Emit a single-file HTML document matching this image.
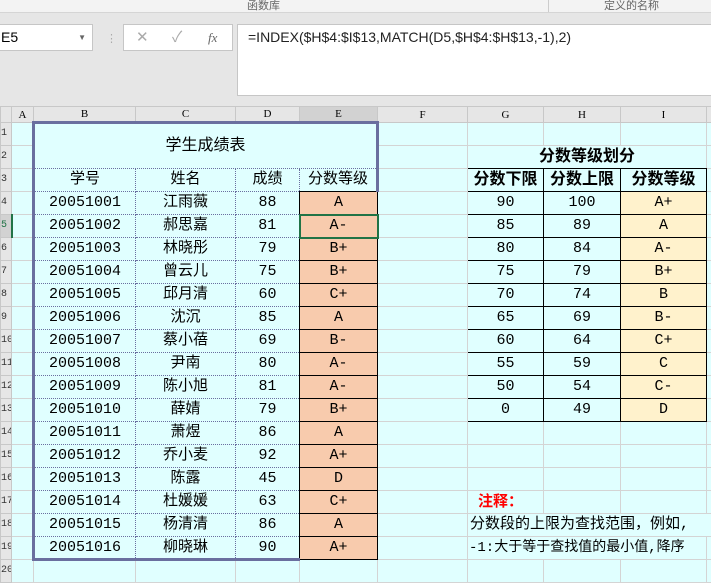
<!DOCTYPE html>
<html><head><meta charset="utf-8"><style>
*{margin:0;padding:0;box-sizing:border-box}
body{width:711px;height:565px;overflow:hidden;background:#e6e6e6;position:relative;font-family:"Liberation Sans","Noto Sans CJK SC",sans-serif}
.rib{position:absolute;left:0;top:0;width:711px;height:13px;background:#f3f3f3;border-bottom:1px solid #d5d5d5;font-size:11px;color:#666;overflow:hidden}
.rib span{position:absolute;top:-3px}
.box{position:absolute;background:#fff;border:1px solid #c6c6c6}
table{position:absolute;left:0;top:106px;width:720px;border-collapse:collapse;table-layout:fixed;font-family:"Liberation Mono","Noto Sans CJK SC",monospace}
td{height:23px;border:1px solid #d4d4d4;background:#e0ffff;text-align:center;font-size:15px;color:#000;white-space:nowrap;overflow:visible;padding:0;line-height:20px}
tr.h td{height:16px;background:#e6e6e6;border-color:#c8c8c8;font-size:11px;font-family:"Liberation Serif",serif;line-height:14px}
td.rh{background:#e6e6e6;border-color:#c8c8c8;font-size:10px;text-align:left;color:#333;overflow:hidden}
td.d{border:1px dotted #6a6fa0}
td.e{background:#f8cbad;border:1px solid #000}
td.g{border:1px solid #000}
td.i{background:#fff2cc;border:1px solid #000}
td.b{font-weight:bold;font-size:16px;font-family:"Liberation Sans","Noto Sans CJK SC",sans-serif}
</style></head><body>
<div class="rib"><span style="left:247px">函数库</span><span style="left:548px;top:0;width:1px;height:13px;background:#ccc"></span><span style="left:604px">定义的名称</span></div>
<div class="box" style="left:-2px;top:24px;width:95px;height:27px;font-size:14px;line-height:25px;padding-left:2px">E5<span style="position:absolute;right:6px;top:0;font-size:8px;color:#666">▼</span></div>
<div style="position:absolute;left:106px;top:32px;color:#aaa;font-size:11px">⋮</div>
<div class="box" style="left:123px;top:24px;width:110px;height:27px;color:#aaa;font-size:15px;line-height:25px"><span style="position:absolute;left:12px">✕</span><span style="position:absolute;left:48px">✓</span><span style="position:absolute;left:84px;color:#666;font-style:italic;font-family:'Liberation Serif',serif;font-size:13px">fx</span></div>
<div class="box" style="left:237px;top:24px;width:480px;height:72px;font-size:14px;line-height:25px;padding-left:10px;color:#222">=INDEX($H$4:$I$13,MATCH(D5,$H$4:$H$13,-1),2)</div>
<table>
<colgroup><col style="width:11px"><col style="width:22px"><col style="width:102px"><col style="width:100px"><col style="width:64px"><col style="width:78px"><col style="width:90px"><col style="width:76px"><col style="width:77px"><col style="width:86px"><col style="width:14px"></colgroup>
<tr class="h"><td></td><td>A</td><td>B</td><td>C</td><td>D</td><td style="background:#d2d2d2;border-bottom:2px solid #217346">E</td><td>F</td><td>G</td><td>H</td><td>I</td><td></td></tr>
<tr><td class="rh">1</td><td></td><td colspan="4" rowspan="2" style="border:3px solid #6a6f9f;border-bottom:1px dotted #6a6fa0;font-size:16px">学生成绩表</td><td></td><td></td><td></td><td></td><td></td></tr>
<tr><td class="rh">2</td><td></td><td></td><td colspan="3" class="b" style="border-bottom:1px solid #000">分数等级划分</td><td></td></tr>
<tr><td class="rh">3</td><td></td><td class="d" style="border-left:3px solid #6a6f9f">学号</td><td class="d">姓名</td><td class="d">成绩</td><td class="d" style="border-right:3px solid #6a6f9f">分数等级</td><td></td><td class="g b">分数下限</td><td class="g b">分数上限</td><td class="g b">分数等级</td><td></td></tr>
<tr><td class="rh">4</td><td></td><td class="d" style="border-left:3px solid #6a6f9f">20051001</td><td class="d">江雨薇</td><td class="d">88</td><td class="e">A</td><td></td><td class="g">90</td><td class="g">100</td><td class="i">A+</td><td></td></tr>
<tr><td class="rh" style="background:#d2d2d2;border-right:2px solid #217346;color:#217346">5</td><td></td><td class="d" style="border-left:3px solid #6a6f9f">20051002</td><td class="d">郝思嘉</td><td class="d">81</td><td class="e" style="border:2px solid #217346">A-</td><td></td><td class="g">85</td><td class="g">89</td><td class="i">A</td><td></td></tr>
<tr><td class="rh">6</td><td></td><td class="d" style="border-left:3px solid #6a6f9f">20051003</td><td class="d">林晓彤</td><td class="d">79</td><td class="e">B+</td><td></td><td class="g">80</td><td class="g">84</td><td class="i">A-</td><td></td></tr>
<tr><td class="rh">7</td><td></td><td class="d" style="border-left:3px solid #6a6f9f">20051004</td><td class="d">曾云儿</td><td class="d">75</td><td class="e">B+</td><td></td><td class="g">75</td><td class="g">79</td><td class="i">B+</td><td></td></tr>
<tr><td class="rh">8</td><td></td><td class="d" style="border-left:3px solid #6a6f9f">20051005</td><td class="d">邱月清</td><td class="d">60</td><td class="e">C+</td><td></td><td class="g">70</td><td class="g">74</td><td class="i">B</td><td></td></tr>
<tr><td class="rh">9</td><td></td><td class="d" style="border-left:3px solid #6a6f9f">20051006</td><td class="d">沈沉</td><td class="d">85</td><td class="e">A</td><td></td><td class="g">65</td><td class="g">69</td><td class="i">B-</td><td></td></tr>
<tr><td class="rh">10</td><td></td><td class="d" style="border-left:3px solid #6a6f9f">20051007</td><td class="d">蔡小蓓</td><td class="d">69</td><td class="e">B-</td><td></td><td class="g">60</td><td class="g">64</td><td class="i">C+</td><td></td></tr>
<tr><td class="rh">11</td><td></td><td class="d" style="border-left:3px solid #6a6f9f">20051008</td><td class="d">尹南</td><td class="d">80</td><td class="e">A-</td><td></td><td class="g">55</td><td class="g">59</td><td class="i">C</td><td></td></tr>
<tr><td class="rh">12</td><td></td><td class="d" style="border-left:3px solid #6a6f9f">20051009</td><td class="d">陈小旭</td><td class="d">81</td><td class="e">A-</td><td></td><td class="g">50</td><td class="g">54</td><td class="i">C-</td><td></td></tr>
<tr><td class="rh">13</td><td></td><td class="d" style="border-left:3px solid #6a6f9f">20051010</td><td class="d">薛婧</td><td class="d">79</td><td class="e">B+</td><td></td><td class="g">0</td><td class="g">49</td><td class="i">D</td><td></td></tr>
<tr><td class="rh">14</td><td></td><td class="d" style="border-left:3px solid #6a6f9f">20051011</td><td class="d">萧煜</td><td class="d">86</td><td class="e">A</td><td></td><td></td><td></td><td></td><td></td></tr>
<tr><td class="rh">15</td><td></td><td class="d" style="border-left:3px solid #6a6f9f">20051012</td><td class="d">乔小麦</td><td class="d">92</td><td class="e">A+</td><td></td><td></td><td></td><td></td><td></td></tr>
<tr><td class="rh">16</td><td></td><td class="d" style="border-left:3px solid #6a6f9f">20051013</td><td class="d">陈露</td><td class="d">45</td><td class="e">D</td><td></td><td></td><td></td><td></td><td></td></tr>
<tr><td class="rh">17</td><td></td><td class="d" style="border-left:3px solid #6a6f9f">20051014</td><td class="d">杜媛媛</td><td class="d">63</td><td class="e">C+</td><td></td><td style="color:#f00;font-weight:bold;text-align:left;padding-left:10px;font-family:'Liberation Sans','Noto Sans CJK SC',sans-serif">注释：</td><td></td><td></td><td></td></tr>
<tr><td class="rh">18</td><td></td><td class="d" style="border-left:3px solid #6a6f9f">20051015</td><td class="d">杨清清</td><td class="d">86</td><td class="e">A</td><td></td><td colspan="4" style="text-align:left;padding-left:2px;overflow:hidden">分数段的上限为查找范围，例如,</td></tr>
<tr><td class="rh">19</td><td></td><td class="d" style="border-left:3px solid #6a6f9f;border-bottom:3px solid #6a6f9f">20051016</td><td class="d" style="border-bottom:3px solid #6a6f9f">柳晓琳</td><td class="d" style="border-bottom:3px solid #6a6f9f">90</td><td class="e">A+</td><td></td><td colspan="3" style="text-align:left;padding-left:1px;font-size:14px">-1:大于等于查找值的最小值,降序</td><td></td></tr>
<tr><td class="rh">20</td><td></td><td></td><td></td><td></td><td></td><td></td><td></td><td></td><td></td><td></td></tr>
</table>
</body></html>
